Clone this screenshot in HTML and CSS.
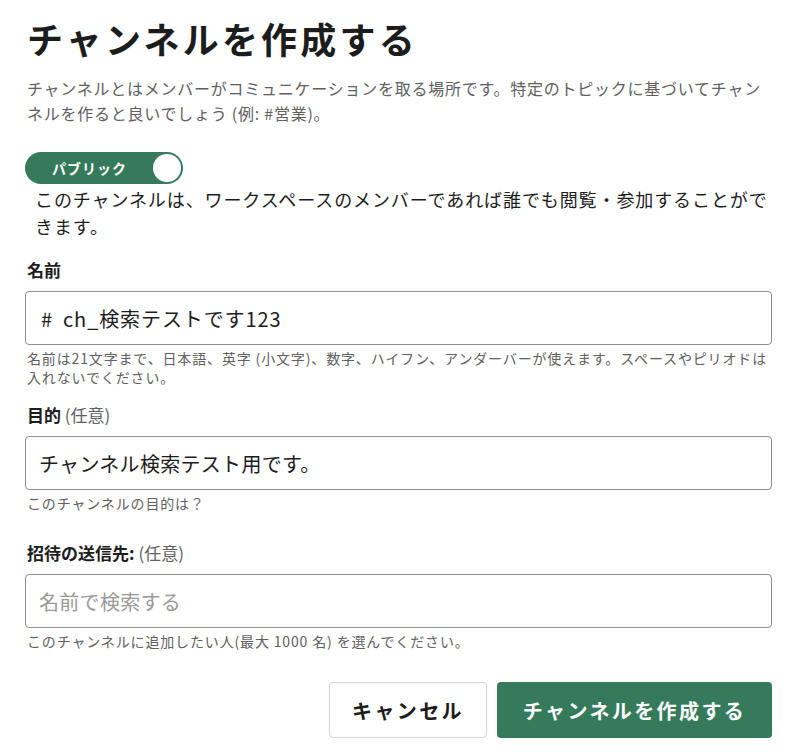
FILE: index.html
```html
<!DOCTYPE html>
<html lang="ja">
<head>
    <meta charset="UTF-8">
    <title>チャンネルを作成する</title>
    <link rel="stylesheet" href="styles.css">
</head>
<body>
    <div class="dialog">
        <h1 class="title">チャンネルを作成する</h1>
        <p class="lead">チャンネルとはメンバーがコミュニケーションを取る場所です。特定のトピックに基づいてチャンネルを作ると良いでしょう (例: #営業)。</p>

        <div class="toggle">
            <span class="toggle-label">パブリック</span>
            <span class="toggle-knob"></span>
        </div>
        <p class="toggle-note">このチャンネルは、ワークスペースのメンバーであれば誰でも閲覧・参加することができます。</p>

        <div class="field field-name">
            <label class="field-label">名前</label>
            <div class="input input-name"><span class="hash">#</span>ch_検索テストです123</div>
            <p class="hint">名前は21文字まで、日本語、英字 (小文字)、数字、ハイフン、アンダーバーが使えます。スペースやピリオドは入れないでください。</p>
        </div>

        <div class="field field-purpose">
            <label class="field-label">目的 <span class="optional">(任意)</span></label>
            <div class="input">チャンネル検索テスト用です。</div>
            <p class="hint">このチャンネルの目的は？</p>
        </div>

        <div class="field field-invite">
            <label class="field-label">招待の送信先: <span class="optional">(任意)</span></label>
            <div class="input placeholder">名前で検索する</div>
            <p class="hint">このチャンネルに追加したい人(最大 1000 名) を選んでください。</p>
        </div>

        <div class="actions">
            <button class="btn btn-cancel">キャンセル</button>
            <button class="btn btn-primary">チャンネルを作成する</button>
        </div>
    </div>
</body>
</html>
```

FILE: styles.css
```css
body {
    margin: 0;
    background-color: #ffffff;
    color: #1d1c1d;
    font-family: "Noto Sans CJK JP", "Noto Sans", sans-serif;
}
.dialog {
    width: 747px;
    padding: 16px 0 0 25px;
}
.title {
    margin: 0 0 0 2px;
    font-size: 36px;
    line-height: 44px;
    font-weight: 700;
    letter-spacing: 3.2px;
}
.lead {
    margin: 16px 0 0 2px;
    font-size: 16px;
    line-height: 25px;
    letter-spacing: 0.75px;
    color: #616061;
}
.toggle {
    margin-top: 26px;
    width: 158px;
    height: 32px;
    border-radius: 16px;
    background-color: #357a5b;
    display: flex;
    align-items: center;
    justify-content: space-between;
    padding: 0 2px 0 27px;
    box-sizing: border-box;
}
.toggle-label {
    color: #ffffff;
    font-size: 14px;
    font-weight: 700;
    letter-spacing: 1px;
}
.toggle-knob {
    width: 28px;
    height: 28px;
    border-radius: 50%;
    background-color: #ffffff;
}
.toggle-note {
    margin: 2px 0 0 10px;
    font-size: 18px;
    line-height: 27px;
    letter-spacing: 0.9px;
    color: #1d1c1d;
}
.field-name {
    margin-top: 18px;
}
.field-purpose {
    margin-top: 16px;
}
.field-invite {
    margin-top: 28px;
}
.field-label {
    display: block;
    margin: 0 0 9px 2px;
    font-size: 17px;
    line-height: 24px;
    font-weight: 700;
}
.optional {
    font-weight: 400;
    color: #616061;
}
.input {
    height: 54px;
    box-sizing: border-box;
    border: 1px solid #8f8e8f;
    border-radius: 4px;
    padding: 0 13px;
    display: flex;
    align-items: center;
    font-size: 20px;
    letter-spacing: 0.3px;
    color: #1d1c1d;
}
.input-name {
    letter-spacing: 0.9px;
}
.hash {
    margin: 0 10px 0 2px;
}
.placeholder {
    color: #9a999a;
}
.hint {
    margin: 4px 0 0 2px;
    font-size: 14px;
    line-height: 19px;
    letter-spacing: 0.85px;
    color: #616061;
}
.actions {
    margin-top: 31px;
    display: flex;
    justify-content: flex-end;
    gap: 10px;
}
.btn {
    height: 56px;
    border-radius: 4px;
    font-family: "Noto Sans CJK JP", "Noto Sans", sans-serif;
    font-size: 20px;
    font-weight: 700;
    letter-spacing: 2.4px;
    cursor: pointer;
}
.btn-cancel {
    width: 158px;
    background-color: #ffffff;
    border: 1px solid #d6d6d6;
    color: #1d1c1d;
}
.btn-primary {
    width: 275px;
    background-color: #357a5b;
    border: none;
    color: #ffffff;
}
```
